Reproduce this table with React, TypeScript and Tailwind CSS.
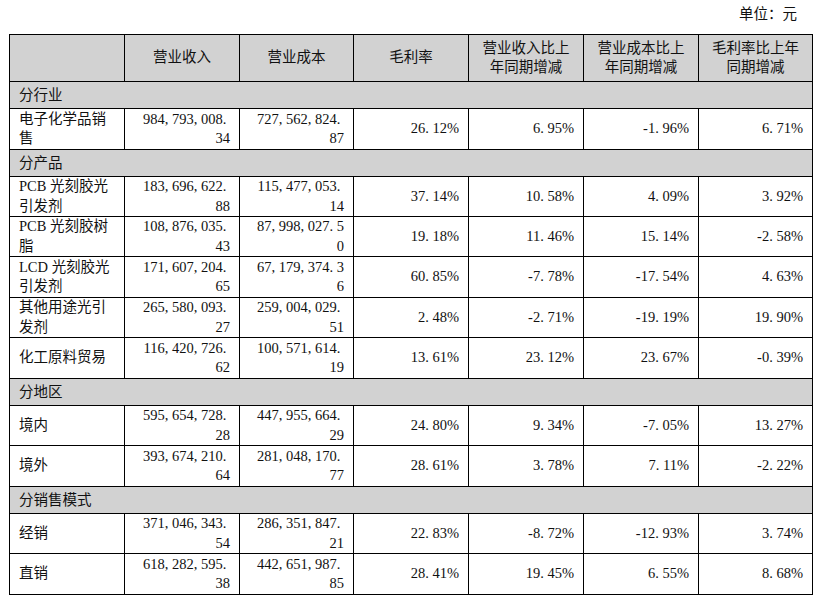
import React from 'react';

type DataRow = {
  kind: 'data';
  h: string;
  name: string[];
  revenue: string[];
  cost: string[];
  rates: string[];
};

type SectionRow = { kind: 'section'; label: string };

const widths = ['w-[115px]', 'w-[115px]', 'w-[114px]', 'w-[115px]', 'w-[115px]', 'w-[115px]', 'w-[114px]'];

const rows: (DataRow | SectionRow)[] = [
  { kind: 'section', label: '分行业' },
  { kind: 'data', h: 'h-[41px]', name: ['电子化学品销', '售'], revenue: ['984,793,008.', '34'], cost: ['727,562,824.', '87'], rates: ['26.12%', '6.95%', '-1.96%', '6.71%'] },
  { kind: 'section', label: '分产品' },
  { kind: 'data', h: 'h-[40px]', name: ['PCB 光刻胶光', '引发剂'], revenue: ['183,696,622.', '88'], cost: ['115,477,053.', '14'], rates: ['37.14%', '10.58%', '4.09%', '3.92%'] },
  { kind: 'data', h: 'h-[40px]', name: ['PCB 光刻胶树', '脂'], revenue: ['108,876,035.', '43'], cost: ['87,998,027.5', '0'], rates: ['19.18%', '11.46%', '15.14%', '-2.58%'] },
  { kind: 'data', h: 'h-[41px]', name: ['LCD 光刻胶光', '引发剂'], revenue: ['171,607,204.', '65'], cost: ['67,179,374.3', '6'], rates: ['60.85%', '-7.78%', '-17.54%', '4.63%'] },
  { kind: 'data', h: 'h-[40px]', name: ['其他用途光引', '发剂'], revenue: ['265,580,093.', '27'], cost: ['259,004,029.', '51'], rates: ['2.48%', '-2.71%', '-19.19%', '19.90%'] },
  { kind: 'data', h: 'h-[41px]', name: ['化工原料贸易'], revenue: ['116,420,726.', '62'], cost: ['100,571,614.', '19'], rates: ['13.61%', '23.12%', '23.67%', '-0.39%'] },
  { kind: 'section', label: '分地区' },
  { kind: 'data', h: 'h-[40px]', name: ['境内'], revenue: ['595,654,728.', '28'], cost: ['447,955,664.', '29'], rates: ['24.80%', '9.34%', '-7.05%', '13.27%'] },
  { kind: 'data', h: 'h-[41px]', name: ['境外'], revenue: ['393,674,210.', '64'], cost: ['281,048,170.', '77'], rates: ['28.61%', '3.78%', '7.11%', '-2.22%'] },
  { kind: 'section', label: '分销售模式' },
  { kind: 'data', h: 'h-[40px]', name: ['经销'], revenue: ['371,046,343.', '54'], cost: ['286,351,847.', '21'], rates: ['22.83%', '-8.72%', '-12.93%', '3.74%'] },
  { kind: 'data', h: 'h-[41px]', name: ['直销'], revenue: ['618,282,595.', '38'], cost: ['442,651,987.', '85'], rates: ['28.41%', '19.45%', '6.55%', '8.68%'] },
];

const headers = [[], ['营业收入'], ['营业成本'], ['毛利率'], ['营业收入比上', '年同期增减'], ['营业成本比上', '年同期增减'], ['毛利率比上年', '同期增减']];

// half-width punctuation like the original document font: each mark takes a digit's width
const Num = ({ value }: { value: string }) => (
  <>
    {value.split(/([,.])/).map((part, i) =>
      part === ',' || part === '.' ? (
        <span key={i} className="inline-block w-[7.25px] text-left">{part}</span>
      ) : (
        <React.Fragment key={i}>{part}</React.Fragment>
      )
    )}
  </>
);

const Lines = ({ lines, num }: { lines: string[]; num?: boolean }) => (
  <div className="w-full">
    {lines.map((l, i) => (
      <div key={i} className="whitespace-nowrap">{num ? <Num value={l} /> : l}</div>
    ))}
  </div>
);

const App: React.FC = () => {
  return (
    <div className="w-[821px] h-[602px] bg-white text-[#111] text-[14.5px] leading-[19.5px] font-['Liberation_Serif','Noto_Sans_CJK_SC',serif]">
      <div className="h-[34px] flex items-center justify-end pr-[24px] pb-[4px]">单位：元</div>
      <div className="ml-[9px] w-[804px] border-l border-t border-black">
        <div className="flex h-[47px] bg-[#d2d2d2]">
          {headers.map((lines, i) => (
            <div key={i} className={`${widths[i]} border-r border-b border-black flex items-center text-center`}>
              <Lines lines={lines} />
            </div>
          ))}
        </div>
        {rows.map((row, ri) =>
          row.kind === 'section' ? (
            <div key={ri} className="h-[27px] bg-[#d2d2d2] border-r border-b border-black flex items-center pl-[9px] pt-[2px]">
              {row.label}
            </div>
          ) : (
            <div key={ri} className={`flex ${row.h}`}>
              <div className={`${widths[0]} border-r border-b border-black flex items-center pl-[9px]`}>
                <Lines lines={row.name} />
              </div>
              <div className={`${widths[1]} border-r border-b border-black flex items-center text-right pr-[9px]`}>
                <Lines lines={row.revenue} num />
              </div>
              <div className={`${widths[2]} border-r border-b border-black flex items-center text-right pr-[9px]`}>
                <Lines lines={row.cost} num />
              </div>
              {row.rates.map((r, i) => (
                <div key={i} className={`${widths[i + 3]} border-r border-b border-black flex items-center justify-end pr-[9px] whitespace-nowrap`}>
                  <Num value={r} />
                </div>
              ))}
            </div>
          )
        )}
      </div>
    </div>
  );
};

export default App;
